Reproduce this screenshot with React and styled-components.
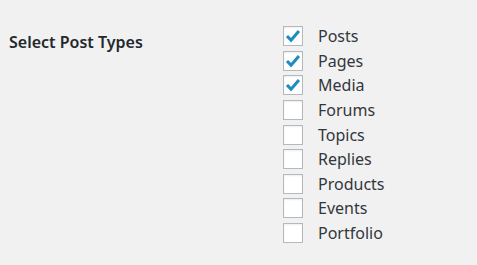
import styled, { createGlobalStyle } from 'styled-components'

const Global = createGlobalStyle`
  html, body {
    margin: 0;
    background: #f1f1f1;
  }
  body {
    font-family: "Segoe UI", "Noto Sans", "Liberation Sans", sans-serif;
    color: #23282d;
  }
`

const Page = styled.div`
  width: 477px;
  height: 265px;
  display: flex;
  padding: 26px 0 0 9px;
  box-sizing: border-box;
`

const Heading = styled.div`
  width: 274px;
  font-size: 16px;
  font-weight: 600;
  line-height: 20px;
  padding-top: 6px;
`

const List = styled.div`
  display: flex;
  flex-direction: column;
`

const Row = styled.label`
  display: flex;
  align-items: flex-start;
  height: 24.625px;
  font-size: 16px;
  line-height: 20px;
  color: #32373c;
`

const Box = styled.span`
  width: 18px;
  height: 18px;
  border: 1px solid #b4b9be;
  background: #fff;
  box-shadow: inset 0 1px 2px rgba(0, 0, 0, 0.07);
  display: flex;
  align-items: center;
  justify-content: center;
  margin-right: 15px;
`

const Check = () => (
  <svg width="18" height="18" viewBox="0 0 20 20">
    <path d="M3.3 10 L7.8 14.6 L16.6 4.4" fill="none" stroke="#1e8cbe" strokeWidth="3.4" />
  </svg>
)

const types = [
  ['Posts', true],
  ['Pages', true],
  ['Media', true],
  ['Forums', false],
  ['Topics', false],
  ['Replies', false],
  ['Products', false],
  ['Events', false],
  ['Portfolio', false],
]

export default function App() {
  return (
    <>
      <Global />
      <Page>
        <Heading>Select Post Types</Heading>
        <List>
          {types.map(([name, on]) => (
            <Row key={name}>
              <Box>{on && <Check />}</Box>
              {name}
            </Row>
          ))}
        </List>
      </Page>
    </>
  )
}
